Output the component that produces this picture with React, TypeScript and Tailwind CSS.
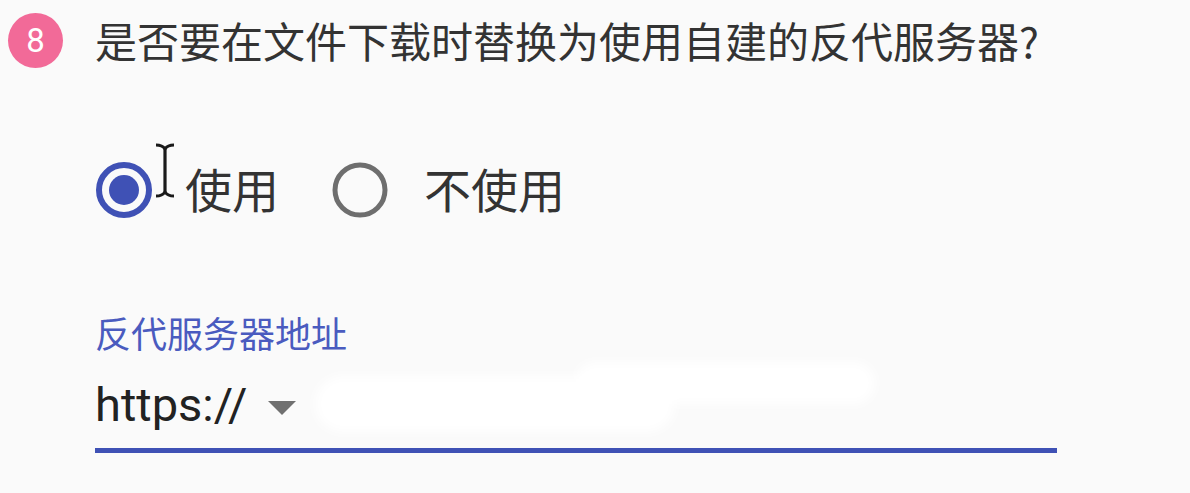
import React from "react";

function RadioOn() {
  return (
    <svg width="58" height="58" viewBox="0 0 58 58">
      <circle cx="29" cy="29" r="25" fill="none" stroke="#3f51b5" strokeWidth="6" />
      <circle cx="29" cy="29" r="15" fill="#3f51b5" />
    </svg>
  );
}

function RadioOff() {
  return (
    <svg width="58" height="58" viewBox="0 0 58 58">
      <circle cx="29" cy="29" r="25" fill="none" stroke="#6e6e6e" strokeWidth="5" />
    </svg>
  );
}

function IBeam() {
  return (
    <svg width="26" height="58" viewBox="0 0 26 58" className="absolute left-[152px] top-[-18px]">
      <path d="M4 3 C9 3 11 4 13 7 C15 4 17 3 22 3" fill="none" stroke="#1a1a1a" strokeWidth="3" />
      <path d="M13 6 L13 51" stroke="#1a1a1a" strokeWidth="3.2" />
      <path d="M4 54 C9 54 11 53 13 50 C15 53 17 54 22 54" fill="none" stroke="#1a1a1a" strokeWidth="3" />
    </svg>
  );
}

export default function App() {
  return (
    <div className="w-[1190px] h-[493px] overflow-hidden bg-[#fafafa] font-['Roboto','Noto_Sans_CJK_SC',sans-serif]">
      {/* question header */}
      <div className="flex items-center h-[80px] pl-[8px]">
        <div className="flex items-center justify-center w-[55px] h-[55px] rounded-full bg-[#f26a98] text-white text-[33px] leading-none">
          8
        </div>
        <div className="ml-[32px] text-[42px] leading-none text-[#333333] font-['Noto_Sans_CJK_SC',sans-serif]">
          是否要在文件下载时替换为使用自建的反代服务器?
        </div>
      </div>

      {/* radios */}
      <div className="relative flex items-center h-[60px] mt-[80px] pl-[95px] font-['Noto_Sans_CJK_SC',sans-serif]">
        <RadioOn />
        <IBeam />
        <span className="ml-[32px] mb-[6px] text-[47px] leading-none text-[#333333]">使用</span>
        <div className="ml-[52px]">
          <RadioOff />
        </div>
        <span className="ml-[35px] mb-[6px] text-[47px] leading-none text-[#333333]">不使用</span>
      </div>

      {/* proxy address field */}
      <div className="ml-[95px] mt-[94px] w-[962px]">
        <div className="text-[36px] leading-none text-[#4a5bbf] font-['Noto_Sans_CJK_SC',sans-serif]">
          反代服务器地址
        </div>
        <div className="relative flex items-start h-[79px] mt-[24px] border-b-[5px] border-[#3f51b5]">
          <span className="mt-[7px] text-[47px] leading-none text-[#222222] font-['Roboto',sans-serif]">https://</span>
          <svg width="30" height="16" viewBox="0 0 30 16" className="ml-[20px] mt-[26px]">
            <path d="M1 1 L29 1 L15 15 Z" fill="#707070" />
          </svg>
          <div className="absolute left-[220px] top-[2px] w-[360px] h-[56px] rounded-[30px] bg-white blur-[6px]" />
          <div className="absolute left-[480px] top-[-12px] w-[300px] h-[42px] rounded-[30px] bg-white blur-[6px]" />
        </div>
      </div>
    </div>
  );
}
